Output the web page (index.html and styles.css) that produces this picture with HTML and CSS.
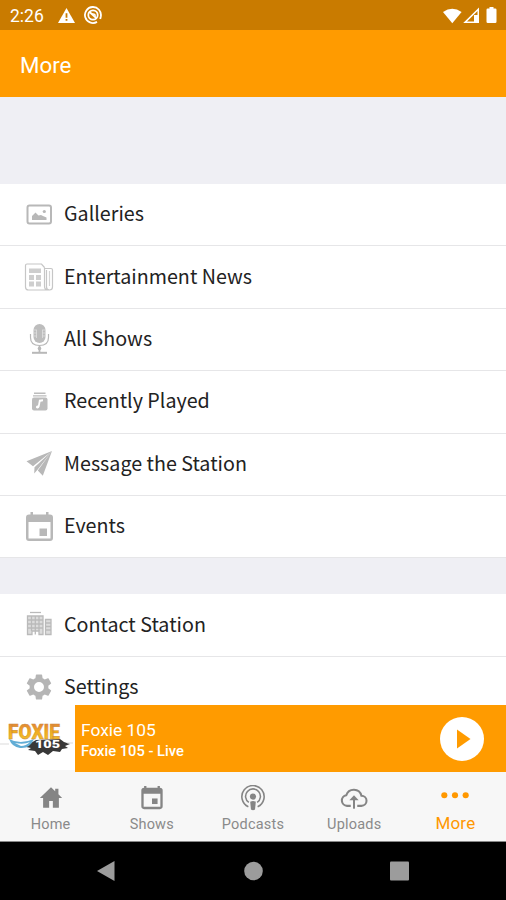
FILE: index.html
```html
<!DOCTYPE html>
<html lang="en">
<head>
  <meta charset="UTF-8" />
  <meta name="viewport" content="width=device-width, initial-scale=1.0" />
  <title>More</title>
  <link rel="stylesheet" href="styles.css">
</head>
<body>
<div class="phone">
  <!-- Status bar -->
  <div class="status-bar">
    <span class="time">2:26</span>
    <svg class="status-warning" width="17" height="15" viewBox="0 0 17 15">
      <path fill="#fff" d="M8.5 0 17 15H0z"/>
      <path fill="#c97b00" d="M7.6 5.2h1.8v4.6H7.6zM7.6 11h1.8v1.7H7.6z"/>
    </svg>
    <svg class="status-app" width="18" height="18" viewBox="0 0 18 18" fill="none" stroke="#fff">
      <path stroke-width="1.8" d="M13 15.9A8 8 0 1 1 16.8 10.5l-.6 2.5"/>
      <circle cx="9" cy="9" r="4.7" stroke-width="1.8"/>
      <path stroke-width="1.9" d="m5.5 6 6.8 6"/>
      <path fill="#fff" stroke="none" d="M9 7.2a3 3 0 0 1 3 3L7.5 7.5z"/>
    </svg>
    <svg class="status-signal" width="56" height="18" viewBox="0 0 56 18" fill="#fff">
      <path d="M0 5.1Q9.3-1.8 18.6 5.1L9.3 16.2z"/>
      <path fill-rule="evenodd" d="M36 .5V16H20.2zM34.5 4v4H31v6.5h-7z"/>
      <path d="M32.3 9h1.2v6h-1.2z"/>
      <path d="M46.500 1.500V0h4v1.500h1.700q1.300 0 1.300 1.300v12q0 1.300-1.300 1.300h-7.400q-1.300 0-1.300-1.300v-12q0-1.300 1.300-1.300z"/>
    </svg>
  </div>

  <div class="app-bar"><h1>More</h1></div>

  <!-- Menu -->
  <div class="menu">
    <div class="menu-group">
      <div class="menu-item">
        <svg class="menu-icon" viewBox="0 0 30 30">
          <rect x="3.500" y="5.500" width="23.500" height="18" rx="2" fill="none" stroke="#b8b8b8" stroke-width="2"/>
          <path fill="#b8b8b8" d="M8 20v-4l3.500-3.500 3 3 2.500-.5 2.500 1.300 3 1.200V20z"/>
          <circle cx="20.300" cy="11.500" r="1.600" fill="#b8b8b8"/>
        </svg>
        <span class="label">Galleries</span>
      </div>
      <div class="menu-item">
        <svg class="menu-icon" viewBox="0 0 30 30" fill="none" stroke="#c6c6c6" stroke-width="1.200">
          <path d="M20.500 5.500V24q0 4 3.500 4H4.500q-3 0-3-3V3.500Q1.500 2 3 2h14.500l3 3.500M20.500 6.500H27q1.500 0 1.500 1.500v17q0 3-3 3t-3-3V8"/>
          <path d="M25.500 9v15" stroke="#d4d4d4"/>
          <path fill="#cecece" stroke="none" d="M5 6.500h12v4.500H5zM5 13h5v5H5zM5 19.500h5v5H5zM12 13h5v5h-5zM12 19.500h5v5h-5z"/>
        </svg>
        <span class="label">Entertainment News</span>
      </div>
      <div class="menu-item">
        <svg class="menu-icon" viewBox="0 0 30 30" fill="none" stroke="#b8b8b8">
          <rect x="9.500" y="0" width="12" height="19" rx="6" fill="#bdbdbd" stroke="none"/>
          <path stroke="#e0e0e0" stroke-width=".8" d="M12.500 6v8M18.500 6v8M10 6h3M18 6h3M10 9h3M18 9h3M10 12h3M18 12h3"/>
          <path stroke-width="1.200" d="M6.500 10v3.500q0 8 9 8t9-8V10"/>
          <path stroke-width="1.800" d="M15.500 22v6"/>
          <path stroke-width="2" d="M8 28.800h15"/>
          <circle cx="15.500" cy="24.500" r="1.800" fill="#b8b8b8" stroke="none"/>
        </svg>
        <span class="label">All Shows</span>
      </div>
      <div class="menu-item">
        <svg class="menu-icon" viewBox="0 0 30 30" fill="#bcbcbc">
          <path d="M10 5.500h11.500V7H10zM9 8.200h13.500v1.300H9z"/>
          <rect x="8" y="10.500" width="15.500" height="13" rx="2"/>
          <path fill="#fff" d="m15 12.800 4-.5v2l-2.500.5-1 5q-.7 2.200-2.500 1.700-1.800-.7-.8-2.300.6-1 1.800-.7z"/>
        </svg>
        <span class="label">Recently Played</span>
      </div>
      <div class="menu-item">
        <svg class="menu-icon" viewBox="0 0 30 30" fill="#b8b8b8">
          <path d="M28 2 2.500 12.300 9 17.300zM28 2 10.500 18.300l-.3 6.200 3.300-3.700zM28 2 13.800 21.500l5 5.200z"/>
        </svg>
        <span class="label">Message the Station</span>
      </div>
      <div class="menu-item">
        <svg class="menu-icon" viewBox="0 0 30 30" fill="#b8b8b8">
          <path fill-rule="evenodd" d="M6.500 0h2.500v2.500h13V0h2.500v2.500h1.500q3 0 3 3V26q0 3-3 3H5q-3 0-3-3V5.500q0-3 3-3h1.500zM4.500 10v16.500h22V10z"/>
          <path d="M15.500 16.500H23V24h-7.500z"/>
        </svg>
        <span class="label">Events</span>
      </div>
    </div>
    <div class="menu-group">
      <div class="menu-item">
        <svg class="menu-icon" viewBox="0 0 30 30" fill="none" stroke="#bababa" stroke-width="1.300">
          <path d="M6 2.500h11"/>
          <path fill="#dcdcdc" d="M3.500 6H19v18.500h-4V21H8v3.500H3.500z"/>
          <path d="M7.500 6v15M11.300 6v18.500M15 6v15M3.500 10H19M3.500 14H19M3.500 18H19"/>
          <path fill="#dcdcdc" d="M21.500 9.500H27v15h-5.500zM21.500 13H27M21.500 16.500H27M21.500 20H27"/>
        </svg>
        <span class="label">Contact Station</span>
      </div>
      <div class="menu-item">
        <svg class="menu-icon" viewBox="0 0 24 24" fill="#b5b5b5">
          <path d="M19.430 12.980c.04-.32.07-.64.07-.98s-.03-.66-.07-.98l2.110-1.650c.19-.15.24-.42.12-.64l-2-3.460c-.12-.22-.39-.3-.61-.22l-2.490 1c-.52-.4-1.080-.73-1.690-.98l-.38-2.650A.488.488 0 0 0 14 2h-4c-.25 0-.46.18-.49.42l-.38 2.650c-.61.25-1.170.59-1.690.98l-2.490-1c-.23-.09-.49 0-.61.22l-2 3.460c-.13.22-.07.49.12.64l2.110 1.650c-.04.32-.07.65-.07.98s.03.66.07.98l-2.110 1.650c-.19.15-.24.42-.12.64l2 3.460c.12.22.39.3.61.22l2.490-1c.52.4 1.080.73 1.690.98l.38 2.650c.03.24.24.42.49.42h4c.25 0 .46-.18.49-.42l.38-2.650c.61-.25 1.170-.59 1.690-.98l2.490 1c.23.09.49 0 .61-.22l2-3.460c.12-.22.07-.49-.12-.64zM12 16a4 4 0 1 1 0-8 4 4 0 0 1 0 8z"/>
        </svg>
        <span class="label">Settings</span>
      </div>
    </div>
  </div>

  <!-- Player -->
  <div class="player">
    <div class="artwork">
      <svg width="74" height="65" viewBox="0 0 74 65">
        <defs>
          <linearGradient id="gold" x2="0" y2="1">
            <stop offset="0.2" stop-color="#e58a35"/>
            <stop offset=".5" stop-color="#f1ae1f"/>
            <stop offset="1" stop-color="#f0c33b"/>
          </linearGradient>
        </defs>
        <path fill="#383838" d="m29 39 7-4 24-1 4 3 6 2-5 2 3 2-6 1-2 3-7-1-5 4-5-3-5 3-3-4-7-1 3-2-5-1z"/>
        <path stroke="#ccc" stroke-width=".7" d="M0 39h9M67 38h6"/>
        <path fill="#62add5" d="M9 34q11 6 25 0-4 10-14 9-8-1-11-9z"/>
        <path fill="#fff" d="M15 38q9 2 15-1-4 4-9 4z"/>
        <text class="logo-name" x="8" y="34" textLength="52" lengthAdjust="spacingAndGlyphs" fill="url(#gold)">FOXIE</text>
        <text class="logo-number" x="35" y="43" textLength="25" lengthAdjust="spacingAndGlyphs">105</text>
      </svg>
    </div>
    <div class="track">
      <span class="track-title">Foxie 105</span>
      <span class="track-sub">Foxie 105 - Live</span>
    </div>
    <svg class="play" width="44" height="44" viewBox="0 0 44 44">
      <circle cx="22" cy="22" r="22" fill="#fff"/>
      <path fill="#ff9b00" d="M17 12.500 30.500 22 17 31.500z"/>
    </svg>
  </div>

  <!-- Tabs -->
  <div class="tabs">
    <div class="tab">
      <svg class="tab-icon" viewBox="0 0 28 28" fill="#858585"><path d="M14 2.500 2 14h3.500v10.500H12v-7.300h4v7.300h6.500V14H26l-4-4V4h-3.500v2.700z"/></svg>
      <span>Home</span>
    </div>
    <div class="tab">
      <svg class="tab-icon" viewBox="0 0 28 28" fill="#858585"><path fill-rule="evenodd" d="M5.500 1h2.500v2h12V1h2.500v2q3 0 3 3v17q0 3-3 3h-17q-3 0-3-3V6q0-3 3-3zM5 9.500v14h18v-14z"/><path d="M14 14.500h6v6h-6z"/></svg>
      <span>Shows</span>
    </div>
    <div class="tab">
      <svg class="tab-icon" viewBox="0 0 28 28" fill="none" stroke="#858585" stroke-width="1.700">
        <path d="M9 23.500a12 12 0 1 1 10 0M9.500 18.800a8 8 0 1 1 9 0"/>
        <circle cx="14" cy="12.500" r="3.300" fill="#858585" stroke="none"/>
        <path fill="#858585" stroke="none" d="M11 18q3-1.500 6 0l-.8 8.500q-2.200 1.200-4.400 0z"/>
      </svg>
      <span>Podcasts</span>
    </div>
    <div class="tab">
      <svg class="tab-icon cloud" viewBox="0 0 30 28" fill="none" stroke="#858585" stroke-width="2.200">
        <path d="M11.500 22.500H7.500a5.800 5.800 0 0 1-.8-11.500A8.500 8.500 0 0 1 23 11.500a5.500 5.500 0 0 1 0 11h-4.500"/>
        <path d="M15 25.500V14"/><path fill="#858585" stroke="none" d="m15 11 5 5.500H10z"/>
      </svg>
      <span>Uploads</span>
    </div>
    <div class="tab active">
      <svg class="tab-icon dots" viewBox="0 0 30 28" fill="#ff9800"><circle cx="3.500" cy="11" r="3.300"/><circle cx="15" cy="11" r="3.300"/><circle cx="26.500" cy="11" r="3.300"/></svg>
      <span>More</span>
    </div>
  </div>

  <!-- System navigation -->
  <div class="system-nav">
    <svg width="20" height="22" viewBox="0 0 20 22" fill="#9c9c9c"><path d="M18.500 1v20L1 11z"/></svg>
    <svg width="20" height="20" viewBox="0 0 20 20" fill="#9c9c9c"><circle cx="10.500" cy="10" r="9.300"/></svg>
    <svg width="20" height="20" viewBox="0 0 20 20" fill="#9c9c9c"><rect x="0" y=".5" width="19" height="19" rx="1"/></svg>
  </div>
</div>
</body>
</html>
```
FILE: styles.css
```css
* {
  box-sizing: border-box;
}

body {
  margin: 0;
  font-family: Roboto, sans-serif;
}

svg {
  display: block;
  flex: none;
}

.phone {
  display: flex;
  flex-direction: column;
  width: 506px;
  height: 900px;
  overflow: hidden;
  background: #fff;
}

/* Status bar */
.status-bar {
  display: flex;
  align-items: center;
  flex: none;
  height: 30px;
  padding: 0 8px 0 10px;
  background: #c97b00;
  color: #fff;
}

.time {
  width: 48px;
  font-size: 17.5px;
  line-height: 30px;
  padding-top: 1px;
}

.status-app {
  margin-left: 9px;
}

.status-signal {
  margin: 1px -1px 0 auto;
}

.app-bar {
  display: flex;
  align-items: center;
  flex: none;
  height: 67px;
  padding: 2px 0 0 20px;
  background: #ff9b00;
  color: #fff;
}

.app-bar h1 {
  margin: 0;
  font-size: 22.3px;
  font-weight: 400;
}

/* Menu */
.menu {
  flex: 1;
  min-height: 0;
  overflow: hidden;
  padding-top: 87px;
  background: #efeff4;
}

.menu-group {
  background: #fff;
}

.menu-group + .menu-group {
  margin-top: 36px;
}

.menu-item {
  display: flex;
  align-items: center;
  height: 62.4px;
  padding-left: 24px;
  border-bottom: 1px solid #e6e6e8;
}

.menu-icon {
  width: 30px;
  height: 30px;
}

.label {
  margin: -3px 0 0 10px;
  font-family: "Noto Sans CJK SC", sans-serif;
  font-size: 19.7px;
  line-height: 30px;
  color: #222;
  white-space: nowrap;
}

/* Player */
.player {
  display: flex;
  align-items: center;
  flex: none;
  height: 67px;
  padding-right: 22px;
  background: #ff9b00;
  color: #fff;
}

.artwork {
  flex: none;
  width: 75px;
  height: 67px;
  background: #fff;
  border-bottom: 2px solid #f7f7f7;
}

.logo-name {
  font: 900 21px Roboto, sans-serif;
  stroke: #c98a3a;
  stroke-width: 0.4px;
}

.logo-number {
  font: 900 10.5px Roboto, sans-serif;
  fill: #fff;
}

.track {
  display: flex;
  flex-direction: column;
  flex: 1;
  padding: 3px 0 0 6px;
}

.track-title {
  font-size: 17.4px;
  line-height: 22px;
}

.track-sub {
  font-size: 14.7px;
  font-weight: 500;
  line-height: 21px;
}

/* Tabs */
.tabs {
  display: grid;
  grid-template-columns: repeat(5, 1fr);
  flex: none;
  height: 70px;
  background: #f7f7f7;
  border-bottom: 1px solid #888;
}

.tab {
  display: flex;
  flex-direction: column;
  align-items: center;
  padding-top: 13px;
  font-size: 14.5px;
  line-height: 20px;
  letter-spacing: 0.2px;
  color: #8a8a8a;
}

.tab-icon {
  width: 26px;
  height: 26px;
  margin-bottom: 4px;
}

.cloud,
.dots {
  width: 30px;
}

.active {
  font-size: 17px;
  color: #ff9800;
}

.active span {
  margin-top: -2px;
}

/* System navigation */
.system-nav {
  display: flex;
  align-items: center;
  justify-content: center;
  gap: 127px;
  flex: none;
  height: 58px;
  background: #000;
}
```
